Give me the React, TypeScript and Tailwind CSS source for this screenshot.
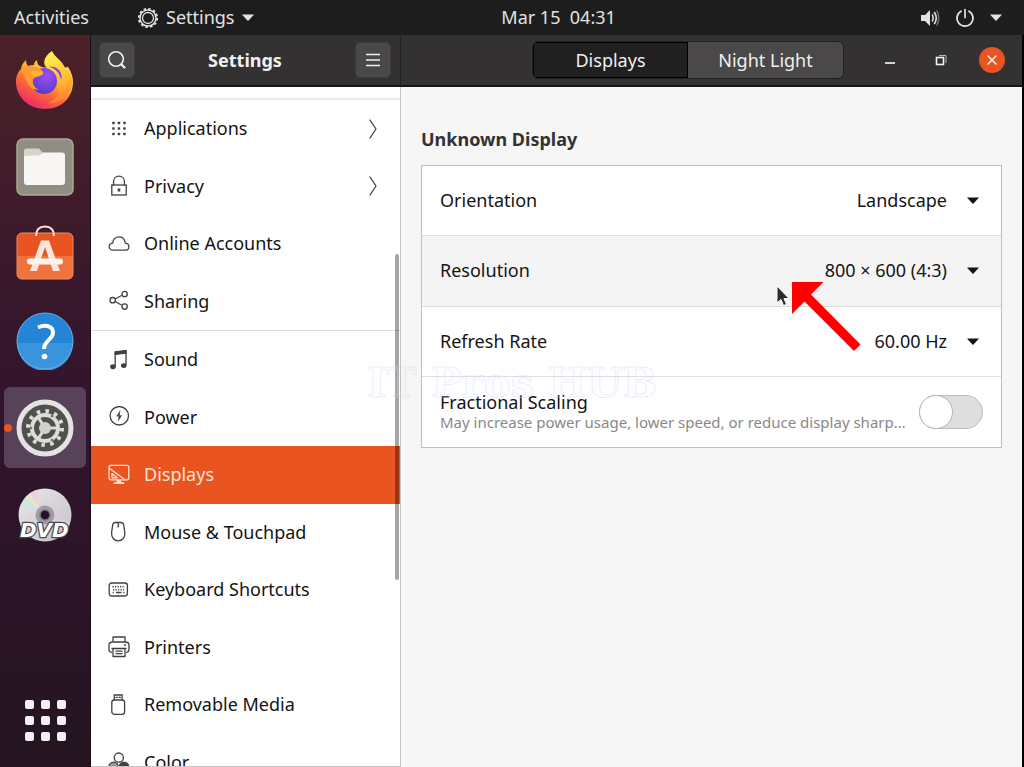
import { useState, type ReactNode } from "react";

/**
 * GNOME Settings, Displays panel: top bar, dock, sidebar and display options.
 */

const strokeProps = {
  fill: "none",
  stroke: "currentColor",
  strokeLinecap: "round",
  strokeLinejoin: "round",
} as const;

function Icon({ children }: { children: ReactNode }) {
  return (
    <svg viewBox="0 0 22 22" className="size-[22px] shrink-0" strokeWidth="1.3" {...strokeProps} aria-hidden="true">
      {children}
    </svg>
  );
}

function Caret({ className }: { className: string }) {
  return (
    <svg viewBox="0 0 12 7" className={className} fill="currentColor" aria-hidden="true">
      <path d="M0 0.5h12q-0.6 0.6-6 6.5Q0.6 1.1 0 0.5Z" />
    </svg>
  );
}

const dotRows = [5.5, 11, 16.5];

const sidebarTop = [
  {
    label: "Applications",
    arrow: true,
    icon: (
      <g fill="currentColor" stroke="none">
        {dotRows.map((y) => dotRows.map((x) => <rect key={`${x}-${y}`} x={x - 1.3} y={y - 1.8} width="2.5" height="2.5" rx="0.6" />))}
      </g>
    ),
  },
  {
    label: "Privacy",
    arrow: true,
    icon: (
      <>
        <rect x="3.8" y="10" width="14.4" height="10" strokeLinejoin="miter" />
        <path d="M5.6 10V6.4C5.6 3.4 8 1.2 11 1.2s5.4 2.2 5.4 5.2V10" />
        <path d="M11 13.5v3" strokeWidth="2.6" strokeLinecap="butt" />
      </>
    ),
  },
  {
    label: "Online Accounts",
    icon: <path d="M5 17.2C2.7 17.2 1.2 15.6 1.2 13.6C1.2 11.7 2.6 10.3 4.6 10.1C5 6.3 7.7 3.8 11 3.8C13.9 3.8 16.2 5.7 17 8.6L17.3 10.2C19.5 10.4 20.9 11.8 20.9 13.7C20.9 15.7 19.4 17.2 17.2 17.2Z" />,
  },
  {
    label: "Sharing",
    icon: (
      <>
        <circle cx="4.7" cy="10.2" r="2.7" />
        <circle cx="16.6" cy="4" r="2.7" />
        <circle cx="16.6" cy="16.6" r="2.7" />
        <path d="m7.6 8.7 5.4-2.9M7.6 11.7l5.4 3" />
      </>
    ),
  },
];

const sidebarBottom = [
  {
    label: "Sound",
    icon: (
      <>
        <path d="M7.2 17V3.2L18 1.8V15.5" />
        <path d="M7.2 2.8 18 1.6v2.6L7.2 5.4Z" fill="currentColor" />
        <ellipse cx="5" cy="17.8" rx="2.2" ry="1.8" fill="currentColor" />
        <ellipse cx="15.8" cy="16.6" rx="2.2" ry="1.8" fill="currentColor" />
      </>
    ),
  },
  {
    label: "Power",
    icon: (
      <>
        <circle cx="11.3" cy="9.8" r="9.2" />
        <path d="M12 4.8 8.6 10.3h2.2l-.5 4.8 3.5-5.7h-2.2Z" fill="currentColor" strokeWidth="0.3" />
      </>
    ),
  },
  {
    label: "Displays",
    icon: (
      <>
        <rect x="1" y="1.3" width="19.8" height="14.5" rx="2" />
        <path d="m1.3 4.2 15.4 11.4M4 9.6v4.2h5.2L4 9.6Z" />
        <path d="M8.6 16.2h4.6v2h3v1.9H5.8v-1.9h2.8Z" fill="currentColor" stroke="none" />
      </>
    ),
  },
  {
    label: "Mouse & Touchpad",
    icon: (
      <>
        <path d="M7.5 1.5h5.4c1.5 0 2.5.9 2.8 2.5l1.1 7.5c.4 4.9-2.5 8.3-6.6 8.3S3.2 16.4 3.6 11.5L4.7 4c.3-1.6 1.3-2.5 2.8-2.5Z" />
        <path d="M10.2 1.8V6" />
      </>
    ),
  },
  {
    label: "Keyboard Shortcuts",
    icon: (
      <>
        <rect x="1.2" y="4" width="18.2" height="13" rx="2.4" />
        <path d="M4.5 7.7h12M5 10.7h11" strokeDasharray="1.2 1.3" strokeLinecap="butt" strokeWidth="1.5" />
        <path d="M4.6 13.5h1.2M8 13.5h5.5M15.3 13.5h1.2" strokeLinecap="butt" />
      </>
    ),
  },
  {
    label: "Printers",
    icon: (
      <>
        <path d="M5 5.5V1h12v4.5M3.3 16.3C1.7 16 1 15 1 13.5V9.5C1 7 2.3 6 4.5 6h13C19.7 6 21 7 21 9.5v4c0 1.5-.7 2.5-2.3 2.8" />
        <path d="M5 13V20.5h12V13M8 15.2h6M8 17.7h6" />
        <path d="M4 12.5h14M16.5 9h1" />
      </>
    ),
  },
  {
    label: "Removable Media",
    icon: (
      <>
        <path d="M6.3 5.5V1h7.8v4.5" strokeLinejoin="miter" />
        <path d="M8 3.3h1.3M11.1 3.3h1.3" />
        <rect x="3.8" y="6" width="12.8" height="14.3" rx="2.6" />
      </>
    ),
  },
  {
    label: "Color",
    icon: (
      <>
        <circle cx="5.6" cy="15.8" r="4.6" fill="#999999" />
        <circle cx="16" cy="15.8" r="4.6" fill="currentColor" />
        <circle cx="10.8" cy="6.6" r="4.6" fill="#ffffff" />
      </>
    ),
  },
];

function FirefoxIcon() {
  return (
    <svg viewBox="0 0 60 60" className="size-[60px]" aria-hidden="true">
      <defs>
        <linearGradient id="ff-body" x1="0.85" y1="0.1" x2="0.25" y2="1">
          <stop offset="0" stopColor="#ffe44d" />
          <stop offset="0.35" stopColor="#ffb02e" />
          <stop offset="0.6" stopColor="#ff6a36" />
          <stop offset="1" stopColor="#e8246e" />
        </linearGradient>
        <linearGradient id="ff-tail" x1="0.5" y1="0" x2="0.7" y2="1">
          <stop offset="0" stopColor="#fff04f" />
          <stop offset="0.6" stopColor="#ffb72f" />
          <stop offset="1" stopColor="#ff7139" />
        </linearGradient>
        <radialGradient id="ff-globe" cx="0.6" cy="0.3" r="0.8">
          <stop offset="0" stopColor="#a34cf5" />
          <stop offset="0.55" stopColor="#7044dd" />
          <stop offset="1" stopColor="#4b3bb5" />
        </radialGradient>
      </defs>
      <path d="M11 10c0 3 1 5 2 6 2-1 4-1 6-1 0-2 1-4 3-5 0 4 2 6 5 7l11 2 7-3c3 1 6 2 8 1 3 5 5 9 5 15 0 16-12 27-28 27C14 59 1 47 1 32c0-6 2-10 5-13 0-3 2-6 5-9Z" fill="url(#ff-body)" />
      <path d="M37 1c3 7 12 10 14 20 2-1 1-3 1-5 4 5 6 11 5 18-2 12-13 20-25 19 10-3 15-11 13-20-2-7-6-11-12-14-6-4-5-12 4-18Z" fill="url(#ff-tail)" />
      <circle cx="29" cy="31" r="13" fill="url(#ff-globe)" />
      <path d="M34 17c6 1 11 6 12 13 1-2 1-6-2-10-3-3-6-4-10-3Z" fill="#8f3fe0" />
      <path d="M6 20c4-4 9-5 14-3 3 1 6 1 8 5 1 2-1 3-3 4-3 1-6 1-7 4-1 4 2 8 6 10-7 0-11-4-12-9-2-4-4-7-6-11Z" fill="#ff9a32" />
      <path d="M15 22c5-2 9-1 13 1-1 2-5 3-8 3-2 0-3-2-5-4Z" fill="#ffb938" />
      <path d="M3 40c6 12 19 17 34 11-7 8-24 8-34-11Z" fill="#f13b55" opacity="0.35" />
    </svg>
  );
}

function FilesIcon() {
  return (
    <svg viewBox="0 0 58 58" className="size-[58px]" aria-hidden="true">
      <rect x="1" y="1" width="56" height="56" rx="6" fill="#918d80" stroke="#aaa79b" strokeWidth="1.5" />
      <path d="M8 17v-4c0-1.5 1-2.5 2.500-2.500H23l4 4.500v6H8Z" fill="#d7d4cb" />
      <path d="M8 19q0-1 1.500-1.300L23 17.500q2 0 4-3h19q3 0 3 3V44q0 3-3 3H11q-3 0-3-3Z" fill="#f7f6f4" />
    </svg>
  );
}

function SoftwareIcon() {
  return (
    <svg viewBox="0 0 58 58" className="size-[58px]" aria-hidden="true">
      <rect x="1" y="8" width="56" height="46" rx="5" fill="#e95420" />
      <path d="M1 31h56v18q0 5-5 5H6q-5 0-5-5Z" fill="#ef733f" />
      <rect x="1" y="8" width="56" height="46" rx="5" fill="none" stroke="#f38b5f" />
      <path d="M20 11c0-7 4-9.500 9-9.500S38 4 38 11" fill="none" stroke="#f9dfd2" strokeWidth="2" />
      <path d="M25 15.500h8l11 30.500h-7l-8-24-8 24h-7Z" fill="#fbe6db" />
      <rect x="11" y="33.500" width="36" height="6" rx="3" fill="#fdf3ee" />
    </svg>
  );
}

function HelpIcon() {
  return (
    <svg viewBox="0 0 58 58" className="size-[58px]" aria-hidden="true">
      <circle cx="29" cy="29" r="28" fill="#2484d6" />
      <path d="M1 31a28 28 0 0 0 56 0Z" fill="#3a93dd" />
      <circle cx="29" cy="29" r="28" fill="none" stroke="#67b0e8" />
      <path d="M22 15.500c7-3 15-2 15 5 0 7-9 8-9 16.500" fill="none" stroke="#ffffff" strokeWidth="4" />
      <circle cx="28.5" cy="44.5" r="2.8" fill="#ffffff" />
    </svg>
  );
}

function GearIcon() {
  return (
    <svg viewBox="0 0 58 58" className="size-[58px]" aria-hidden="true">
      <circle cx="29" cy="29" r="26" fill="#50504e" stroke="#e4e3e2" strokeWidth="5" />
      <circle cx="29" cy="29" r="17" fill="none" stroke="#dddcda" strokeWidth="4" strokeDasharray="3.5 5.4" />
      <circle cx="29" cy="29" r="13" fill="none" stroke="#dddcda" strokeWidth="4" />
      <path d="M29 29h13M29 29 22 18M29 29l-7 11" stroke="#dddcda" strokeWidth="3" />
      <circle cx="29" cy="29" r="6" fill="#d1d0ce" />
      <circle cx="36" cy="17" r="1.3" fill="#72716f" />
      <circle cx="36" cy="41" r="1.3" fill="#72716f" />
      <circle cx="15" cy="29" r="1.3" fill="#72716f" />
    </svg>
  );
}

function DvdIcon() {
  return (
    <svg viewBox="0 0 58 58" className="size-[58px]" aria-hidden="true">
      <defs>
        <linearGradient id="disc" x1="0" y1="0" x2="1" y2="1">
          <stop offset="0" stopColor="#e9e7ea" />
          <stop offset="0.5" stopColor="#d6d4d6" />
          <stop offset="1" stopColor="#c4c2c5" />
        </linearGradient>
      </defs>
      <circle cx="29" cy="29" r="26.5" fill="url(#disc)" />
      <path d="M29 29 5 19 9 12Z" fill="#cfe3e4" />
      <path d="M29 29 9 12l5-5Z" fill="#e6e4c6" />
      <path d="M29 29 14 7l6-3Z" fill="#ead3dc" />
      <path d="m29 29 22 14 3-7Z" fill="#d8d0e4" />
      <circle cx="29" cy="29" r="9.5" fill="#a19ca4" />
      <circle cx="29" cy="29" r="5" fill="#241126" stroke="#77717b" strokeWidth="1.5" />
      <g stroke="#4b484c" strokeWidth="2.5" strokeLinejoin="round" paintOrder="stroke">
        <text x="4" y="51" fill="#ffffff" className="font-['DejaVu_Sans'] text-[20px] font-bold italic">DVD</text>
      </g>
    </svg>
  );
}

const dockApps = [
  { name: "Firefox", icon: <FirefoxIcon /> },
  { name: "Files", icon: <FilesIcon /> },
  { name: "Ubuntu Software", icon: <SoftwareIcon /> },
  { name: "Help", icon: <HelpIcon /> },
  { name: "Settings", icon: <GearIcon />, active: true },
  { name: "DVD", icon: <DvdIcon /> },
];

function TopBar() {
  return (
    <header className="grid h-[35px] shrink-0 grid-cols-3 items-center bg-[#1d1d1d] text-[18px] text-[#e2e2e2]">
      <div className="flex items-center gap-12 pl-[14px]">
        <button>Activities</button>
        <button className="flex items-center gap-[7px]">
          <svg viewBox="0 0 22 22" className="size-[22px]" fill="none" stroke="currentColor" aria-hidden="true">
            <circle cx="11" cy="11" r="9.2" strokeWidth="1.8" strokeDasharray="2.6 2.217" />
            <circle cx="11" cy="11" r="8" strokeWidth="1.5" />
            <circle cx="11" cy="11" r="5.5" strokeWidth="1.3" />
          </svg>
          Settings
          <Caret className="h-[7px] w-3" />
        </button>
      </div>
      <button className="justify-self-start pl-40">
        <time>Mar 15&nbsp; 04:31</time>
      </button>
      <button aria-label="System menu" className="flex items-center gap-[15px] justify-self-end pr-[22px]">
        <svg viewBox="0 0 20 18" className="h-[18px] w-5" aria-hidden="true" {...strokeProps} strokeWidth="1.6">
          <path d="M1 6h4l5-5v16l-5-5H1Z" fill="currentColor" stroke="none" />
          <path d="M12.5 6q1.5 3 0 6" />
          <path d="M14.5 3.5q3.5 5.5 0 11" />
          <path d="M17 2q3.5 7 0 14" opacity="0.4" />
        </svg>
        <svg viewBox="0 0 20 20" className="size-5" aria-hidden="true" {...strokeProps} strokeWidth="1.7">
          <path d="M10 1.5v8M6 3.2a8 8 0 1 0 8 0" />
        </svg>
        <Caret className="h-[7px] w-3" />
      </button>
    </header>
  );
}

function Dock() {
  return (
    <nav aria-label="Dock" className="flex w-[91px] shrink-0 flex-col border-r border-[#1c0d1a] bg-linear-to-b from-[#4b2128] via-[#32142d] via-50% to-[#241420] px-1 pt-1">
      <div className="flex flex-col gap-[6px]">
        {dockApps.map((app) => (
          <button
            key={app.name}
            aria-label={app.name}
            className={`relative flex h-[81px] items-center justify-center rounded-md ${app.active ? "bg-[#57425a]" : ""}`}
          >
            {app.active && <span className="absolute left-0 size-2 rounded-full bg-[#e95420]" />}
            {app.icon}
          </button>
        ))}
      </div>
      <button aria-label="Show Applications" className="mt-auto mb-[26px] grid grid-cols-3 gap-[7px] self-center">
        {Array.from({ length: 9 }, (_, i) => (
          <span key={i} className="size-[9px] rounded-[2px] bg-[#f3f1f3]" />
        ))}
      </button>
    </nav>
  );
}

type Item = { label: string; icon: ReactNode; arrow?: boolean };

function SidebarItem({ item, selected, onSelect }: { item: Item; selected: boolean; onSelect: () => void }) {
  return (
    <li className="flex">
      <button
        onClick={onSelect}
        aria-current={selected ? "page" : undefined}
        className={`flex w-full items-center gap-[14px] pr-5 pl-[17px] text-left ${
          selected ? "bg-[#e95420] text-[#ffe1d3]" : "text-[#404040]"
        }`}
      >
        <Icon>{item.icon}</Icon>
        <span className={selected ? "" : "text-[#141414]"}>{item.label}</span>
        {item.arrow && (
          <svg viewBox="0 0 10 20" className="mr-[2px] ml-auto h-5 w-[10px]" {...strokeProps} strokeWidth="1.3" aria-hidden="true">
            <path d="m2 1 6 9-6 9" />
          </svg>
        )}
      </button>
    </li>
  );
}

function Sidebar() {
  const [current, setCurrent] = useState("Displays");
  const item = (it: Item) => (
    <SidebarItem key={it.label} item={it} selected={current === it.label} onSelect={() => setCurrent(it.label)} />
  );

  return (
    <nav aria-label="Settings panels" className="relative w-[310px] shrink-0 overflow-hidden border-r border-b border-[#c4c4c4] bg-white text-[18px]">
      <ul className="mt-[11px] grid h-[232px] grid-rows-4 border-t-2 border-[#e9e9e9]">{sidebarTop.map(item)}</ul>
      <ul className="grid h-[461px] grid-rows-8 border-t border-[#dddddd]">{sidebarBottom.map(item)}</ul>
      <div className="absolute top-[167px] right-px h-[326px] w-1 rounded-full bg-black/35" />
    </nav>
  );
}

function HeaderBar() {
  const [tab, setTab] = useState("Displays");
  const tabClass = (name: string) =>
    `w-[155px] ${tab === name ? "bg-[#202020] inset-ring inset-ring-black" : "bg-[#4a4849]"}`;

  return (
    <header className="flex h-[52px] shrink-0 border-b-2 border-[#171717] bg-[#333132] text-[18px] text-[#f0f0f0]">
      <div className="flex w-[310px] shrink-0 items-center justify-between border-r border-[#222222] pr-[9px] pl-2">
        <button aria-label="Search" className="flex size-9 items-center justify-center rounded-[5px] border border-[#3d3b3c] bg-[#4a4849]">
          <svg viewBox="0 0 20 20" className="size-5" {...strokeProps} strokeWidth="1.6" aria-hidden="true">
            <circle cx="9" cy="9" r="7.3" />
            <path d="m14.5 14.5 3 3" strokeWidth="2.2" />
          </svg>
        </button>
        <h1 className="font-bold">Settings</h1>
        <button aria-label="Menu" className="flex size-9 items-center justify-center rounded-[5px] border border-[#3d3b3c] bg-[#4a4849]">
          <svg viewBox="0 0 14 14" className="size-[14px]" stroke="currentColor" strokeWidth="1.5" aria-hidden="true">
            <path d="M0 1.5h14M0 7h14M0 12.5h14" />
          </svg>
        </button>
      </div>
      <div className="flex grow items-center justify-end pr-[17px]">
        <div className="flex h-[38px] overflow-hidden rounded-md border border-[#222222]">
          {["Displays", "Night Light"].map((name) => (
            <button key={name} onClick={() => setTab(name)} aria-pressed={tab === name} className={tabClass(name)}>
              {name}
            </button>
          ))}
        </div>
        <div className="ml-[33px] flex items-center gap-[25px]">
          <button aria-label="Minimize" className="flex size-[26px] items-center justify-center">
            <svg viewBox="0 0 12 12" className="size-3" stroke="currentColor" strokeWidth="1.7" aria-hidden="true">
              <path d="M1 9h10" />
            </svg>
          </button>
          <button aria-label="Restore" className="flex size-[26px] items-center justify-center">
            <svg viewBox="0 0 12 12" className="size-3" fill="none" stroke="currentColor" aria-hidden="true">
              <rect x="1.5" y="3.5" width="7" height="7" strokeWidth="1.6" />
              <path d="M4 1.5h7V9" opacity="0.7" />
            </svg>
          </button>
          <button aria-label="Close" className="flex size-[26px] items-center justify-center rounded-full bg-[#e95420]">
            <svg viewBox="0 0 12 12" className="size-3" {...strokeProps} strokeWidth="1.6" aria-hidden="true">
              <path d="m2 2 8 8M10 2l-8 8" />
            </svg>
          </button>
        </div>
      </div>
    </header>
  );
}

const options = [
  { id: "orientation", label: "Orientation", values: ["Landscape"] },
  { id: "resolution", label: "Resolution", values: ["800 × 600 (4:3)"], hover: true },
  { id: "refresh-rate", label: "Refresh Rate", values: ["60.00 Hz"] },
];

function DisplaysPanel() {
  return (
    <main className="min-w-0 grow bg-[#f6f6f6] px-5 pt-10 text-[18px] text-[#141414]">
      <h2 className="leading-6 font-bold text-[#333333]">Unknown Display</h2>
      <div className="mt-[14px] grid h-[283px] grid-cols-1 grid-rows-4 divide-y divide-[#dedede] border border-[#bfbfbf] bg-white">
        {options.map((opt) => (
          <div key={opt.id} className={`flex items-center pr-[22px] pl-[18px] ${opt.hover ? "bg-[#f4f4f4]" : ""}`}>
            <label htmlFor={opt.id}>{opt.label}</label>
            <select id={opt.id} className="ml-auto field-sizing-content appearance-none bg-transparent">
              {opt.values.map((value) => (
                <option key={value}>{value}</option>
              ))}
            </select>
            <Caret className="ml-5 h-[7px] w-3" />
          </div>
        ))}
        <div className="flex items-center gap-3 px-[18px]">
          <label htmlFor="fractional-scaling" className="min-w-0 grow">
            <span className="block leading-5">Fractional Scaling</span>
            <span className="block truncate text-[15px] leading-5 text-[#888888]">
              May increase power usage, lower speed, or reduce display sharp…
            </span>
          </label>
          <input
            id="fractional-scaling"
            type="checkbox"
            role="switch"
            className="h-[34px] w-16 shrink-0 appearance-none rounded-full border border-[#bdbdbd] bg-[#dedede] before:-mt-px before:-ml-px before:block before:size-[34px] before:rounded-full before:border before:border-[#b5b5b5] before:bg-white checked:bg-[#e95420] checked:before:ml-[29px]"
          />
        </div>
      </div>
    </main>
  );
}

/** Watermark, mouse pointer and the red arrow that points at the resolution row. */
function Annotations() {
  return (
    <div className="pointer-events-none absolute inset-0">
      <p className="absolute top-[363px] left-[367px] font-['DejaVu_Serif',serif] text-[41px] leading-10 font-bold whitespace-nowrap text-[#d8d8ff]/5 [-webkit-text-stroke:1px_rgba(215,215,255,0.45)]">
        IT Pros HUB
      </p>
      <svg viewBox="0 0 14 22" className="absolute top-[285px] left-[776px] h-[22px] w-[14px]" aria-hidden="true">
        <path d="M1 1v17l4-3.5 2.5 6 3-1.2-2.5-5.8h5Z" fill="#2b2b2b" stroke="#ffffff" />
      </svg>
      <svg viewBox="0 0 70 70" className="absolute top-[282px] left-[791px] size-[70px]" fill="#ff0000" aria-hidden="true">
        <path d="M1 0H32.5L20 12.5 69.5 62.5 63 69 13.5 19.5 1 32Z" />
      </svg>
    </div>
  );
}

export default function App() {
  return (
    <div className="relative flex h-screen flex-col overflow-hidden bg-black font-['Noto_Sans',sans-serif]">
      <TopBar />
      <div className="flex min-h-0 grow pr-[2px]">
        <Dock />
        <div className="flex min-w-0 grow flex-col">
          <HeaderBar />
          <div className="flex min-h-0 grow">
            <Sidebar />
            <DisplaysPanel />
          </div>
        </div>
      </div>
      <Annotations />
    </div>
  );
}
